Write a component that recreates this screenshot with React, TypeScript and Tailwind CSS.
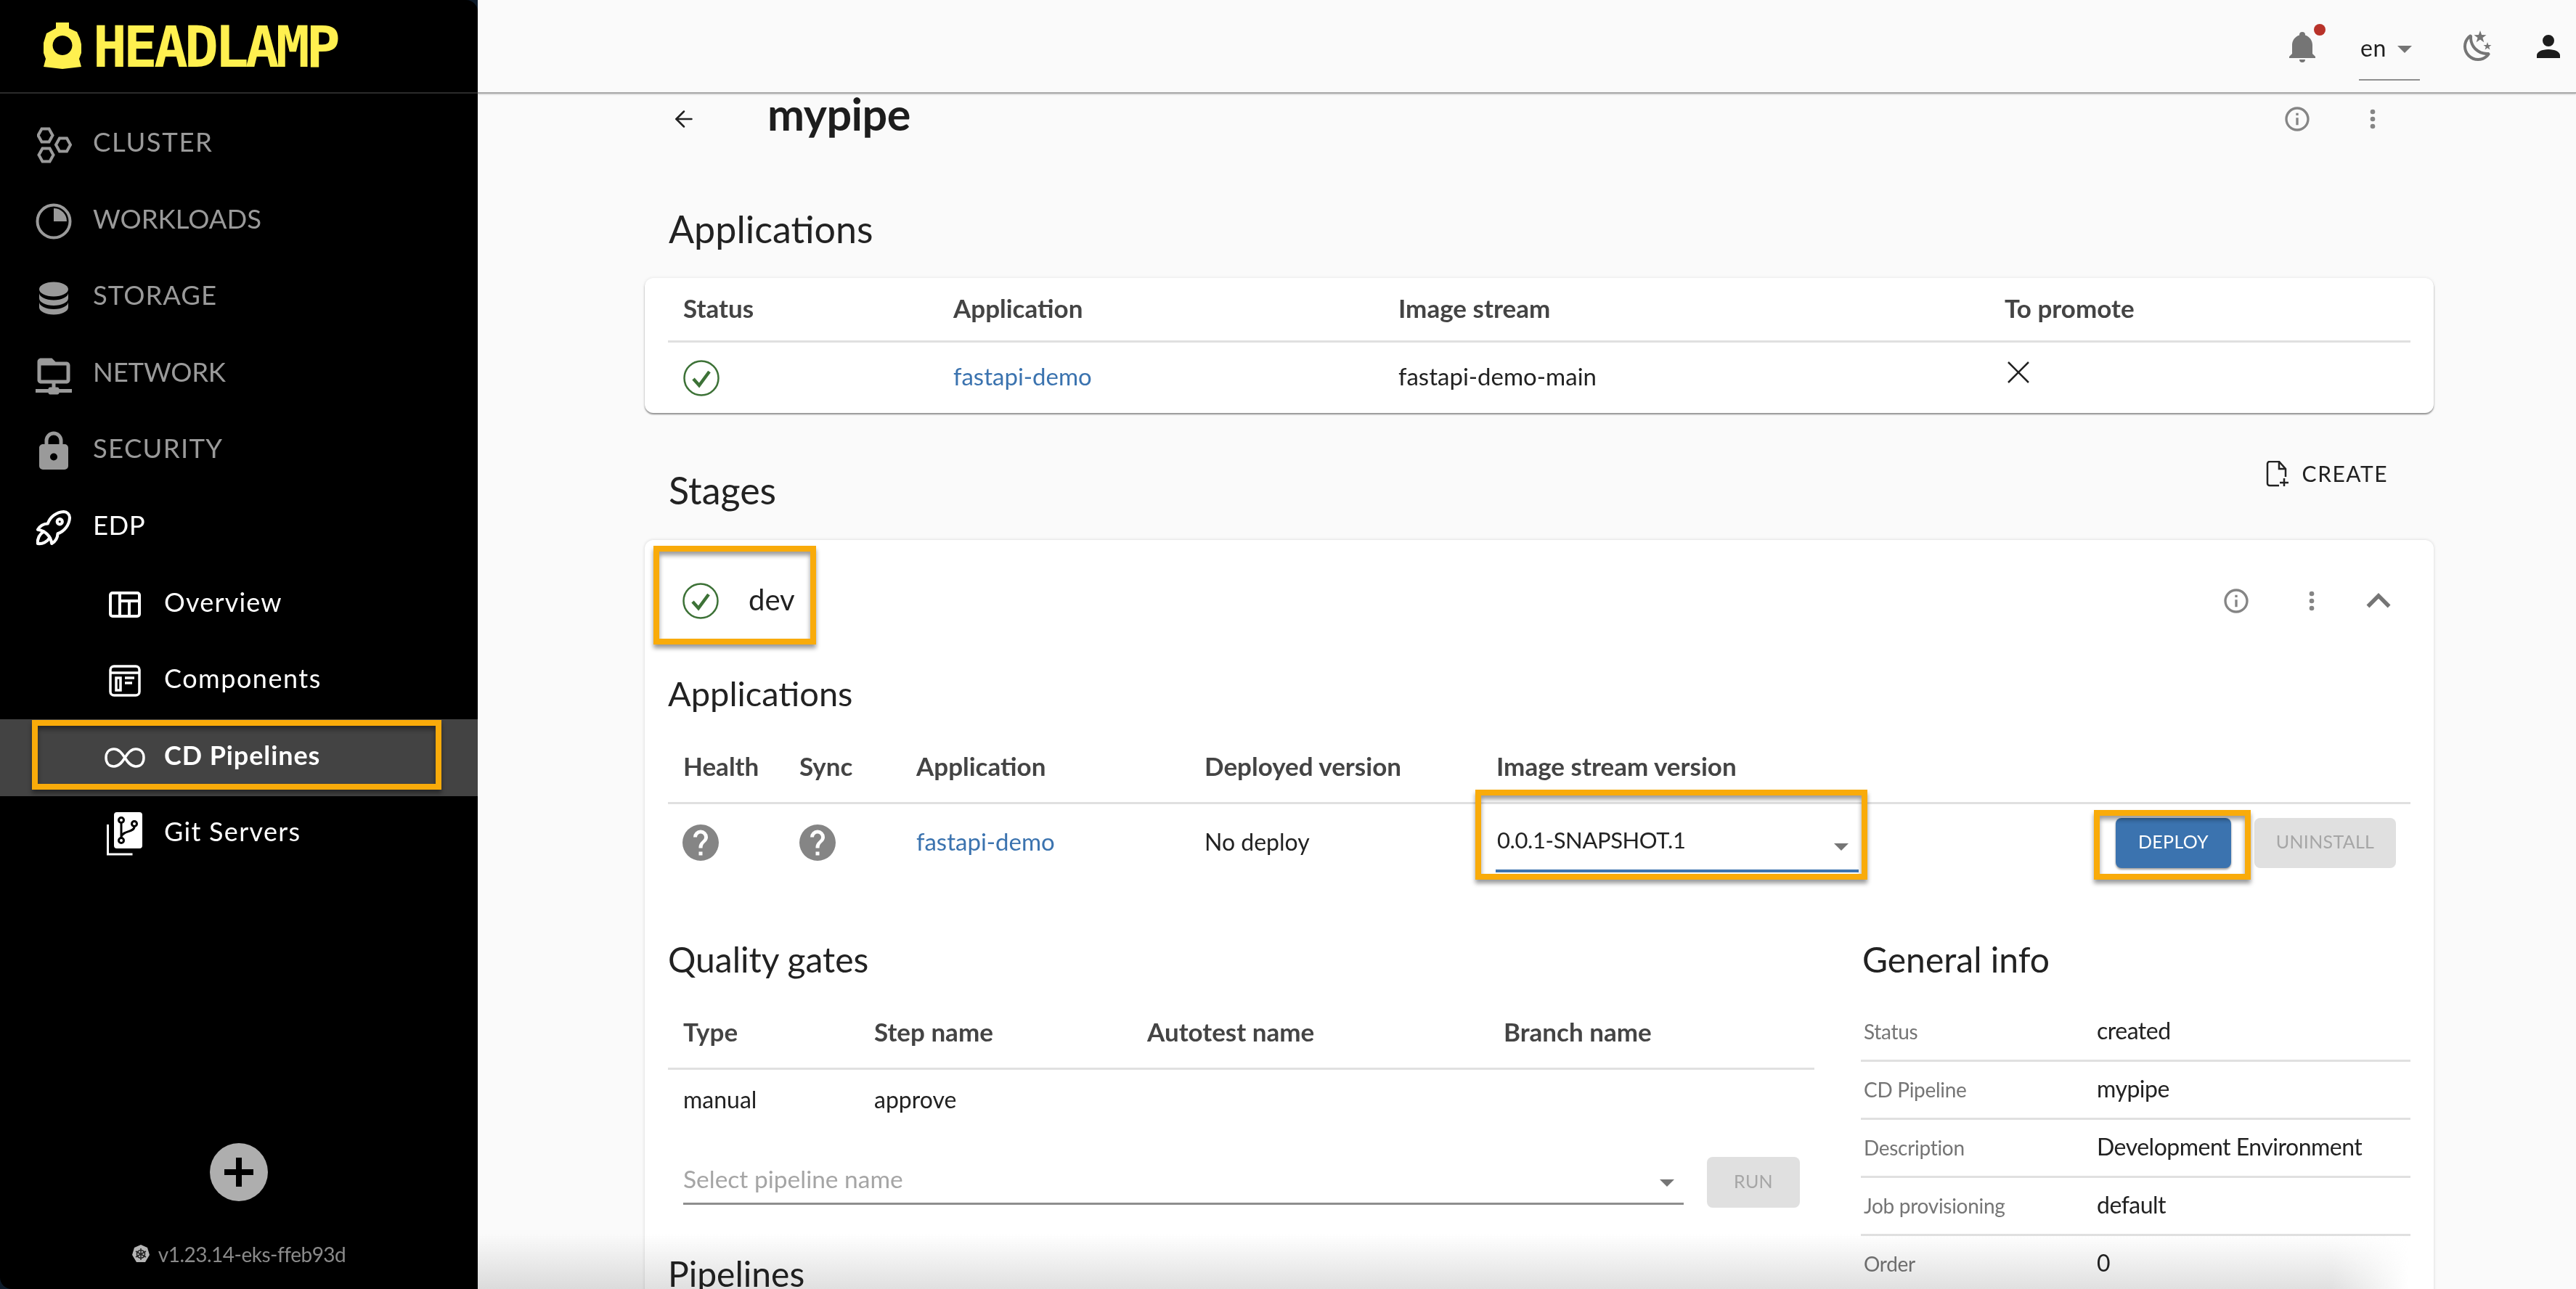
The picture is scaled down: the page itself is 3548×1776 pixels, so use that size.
import React from "react";
import { ArrowLeft } from "lucide-react";

const mdi = {
  storage: "M12,3C7.58,3 4,4.79 4,7C4,9.21 7.58,11 12,11C16.42,11 20,9.21 20,7C20,4.79 16.42,3 12,3M4,9V12C4,14.21 7.58,16 12,16C16.42,16 20,14.21 20,12V9C20,11.21 16.42,13 12,13C7.58,13 4,11.21 4,9M4,14V17C4,19.21 7.58,21 12,21C16.42,21 20,19.21 20,17V14C20,16.21 16.42,18 12,18C7.58,18 4,16.21 4,14Z",
  network: "M15 20C15 19.45 14.55 19 14 19H13V17H19C20.11 17 21 16.11 21 15V7C21 5.9 20.11 5 19 5H13L11 3H5C3.9 3 3 3.9 3 5V15C3 16.11 3.9 17 5 17H11V19H10C9.45 19 9 19.45 9 20H2V22H9C9 22.55 9.45 23 10 23H14C14.55 23 15 22.55 15 22H22V20H15M5 15V7H19V15H5Z",
  lock: "M12,17A2,2 0 0,0 14,15C14,13.89 13.1,13 12,13A2,2 0 0,0 10,15A2,2 0 0,0 12,17M18,8A2,2 0 0,1 20,10V20A2,2 0 0,1 18,22H6A2,2 0 0,1 4,20V10C4,8.89 4.9,8 6,8H7V6A5,5 0 0,1 12,1A5,5 0 0,1 17,6V8H18M12,3A3,3 0 0,0 9,6V8H15V6A3,3 0 0,0 12,3Z",
  bell: "M21,19V20H3V19L5,17V11C5,7.9 7.03,5.17 10,4.29C10,4.19 10,4.1 10,4A2,2 0 0,1 12,2A2,2 0 0,1 14,4C14,4.1 14,4.19 14,4.29C16.97,5.17 19,7.9 19,11V17L21,19M14,21A2,2 0 0,1 12,23A2,2 0 0,1 10,21",
  moon: "M17.75,4.09L15.22,6.03L16.13,9.09L13.5,7.28L10.87,9.09L11.78,6.03L9.25,4.09L12.44,4L13.5,1L14.56,4L17.75,4.09M21.25,11L19.61,12.25L20.2,14.23L18.5,13.06L16.8,14.23L17.39,12.25L15.75,11L17.81,10.95L18.5,9L19.19,10.95L21.25,11M18.97,15.95C19.8,15.87 20.69,17.05 20.16,17.8C19.84,18.25 19.5,18.67 19.08,19.07C15.17,23 8.84,23 4.94,19.07C1.03,15.17 1.03,8.83 4.94,4.93C5.34,4.53 5.76,4.17 6.21,3.85C6.96,3.32 8.14,4.21 8.06,5.04C7.79,7.9 8.75,10.87 10.95,13.06C13.14,15.26 16.1,16.22 18.97,15.95M17.33,17.97C14.5,17.81 11.7,16.64 9.53,14.5C7.36,12.31 6.2,9.5 6.04,6.68C3.23,9.82 3.34,14.64 6.35,17.66C9.37,20.67 14.19,20.78 17.33,17.97Z",
  person: "M12,4A4,4 0 0,1 16,8A4,4 0 0,1 12,12A4,4 0 0,1 8,8A4,4 0 0,1 12,4M12,14C16.42,14 20,15.79 20,18V20H4V18C4,15.79 7.58,14 12,14Z",
  info: "M11,9H13V7H11M12,20C7.59,20 4,16.41 4,12C4,7.59 7.59,4 12,4C16.41,4 20,7.59 20,12C20,16.41 16.41,20 12,20M12,2A10,10 0 0,0 2,12A10,10 0 0,0 12,22A10,10 0 0,0 22,12A10,10 0 0,0 12,2M11,17H13V11H11V17Z",
  dots: "M12,16A2,2 0 0,1 14,18A2,2 0 0,1 12,20A2,2 0 0,1 10,18A2,2 0 0,1 12,16M12,10A2,2 0 0,1 14,12A2,2 0 0,1 12,14A2,2 0 0,1 10,12A2,2 0 0,1 12,10M12,4A2,2 0 0,1 14,6A2,2 0 0,1 12,8A2,2 0 0,1 10,6A2,2 0 0,1 12,4Z",
  help: "M15.07,11.25L14.17,12.17C13.45,12.89 13,13.5 13,15H11V14.5C11,13.39 11.45,12.39 12.17,11.67L13.41,10.41C13.78,10.05 14,9.55 14,9C14,7.89 13.1,7 12,7A2,2 0 0,0 10,9H8A4,4 0 0,1 12,5A4,4 0 0,1 16,9C16,9.88 15.64,10.67 15.07,11.25M13,19H11V17H13M12,2A10,10 0 0,0 2,12A10,10 0 0,0 12,22A10,10 0 0,0 22,12C22,6.47 17.5,2 12,2Z",
  chevron: "M7.41,15.41L12,10.83L16.59,15.41L18,14L12,8L6,14L7.41,15.41Z",
};

function Mdi({ d, className }: { d: string; className: string }) {
  return (
    <svg viewBox="0 0 24 24" fill="currentColor" className={className}>
      <path d={d} />
    </svg>
  );
}

function HexIcon() {
  return (
    <svg viewBox="0 0 48 50" fill="none" stroke="currentColor" strokeWidth="4" className="w-[48px] h-[50px]">
      <path d="M1.5 11.5L6.5 2.5H16.5L21.5 11.5L16.5 20.5H6.5z" />
      <path d="M26 24.5L31 15.5H41L46 24.5L41 33.5H31z" />
      <path d="M2.5 38.5L7.5 29.5H17.5L22.5 38.5L17.5 47.5H7.5z" />
    </svg>
  );
}

function WorkloadIcon() {
  return (
    <svg viewBox="0 0 50 50" className="w-[50px] h-[50px]">
      <circle cx="25" cy="25" r="22.5" fill="none" stroke="currentColor" strokeWidth="4" />
      <path d="M25 7A18 18 0 0 1 43 25H25z" fill="currentColor" />
    </svg>
  );
}

function RocketIcon() {
  return (
    <svg viewBox="0 0 24 24" fill="none" stroke="currentColor" strokeWidth="1.500" strokeLinecap="round" strokeLinejoin="round" className="w-[66px] h-[66px]">
      <path d="M4 13a8 8 0 0 1 7 7a6 6 0 0 0 3 -5a9 9 0 0 0 6 -8a3 3 0 0 0 -3 -3a9 9 0 0 0 -8 6a6 6 0 0 0 -5 3" />
      <path d="M7 14a6 6 0 0 0 -3 6a6 6 0 0 0 6 -3" />
      <circle cx="15" cy="9" r="1.3" />
    </svg>
  );
}

function OverviewIcon() {
  return (
    <svg viewBox="0 0 44 36" fill="none" stroke="currentColor" strokeWidth="4" className="w-[44px] h-[36px]">
      <rect x="2" y="2" width="40" height="32" rx="3" />
      <path d="M15 2v32M15 13h27M28 13v21" />
    </svg>
  );
}

function ComponentsIcon() {
  return (
    <svg viewBox="0 0 44 44" fill="none" stroke="currentColor" strokeWidth="3.5" className="w-[44px] h-[44px]">
      <rect x="2" y="2" width="40" height="40" rx="5" />
      <path d="M2 11h40M22 18h13M22 25h10" />
      <rect x="10" y="18" width="6" height="17" />
    </svg>
  );
}

function InfinityIcon() {
  return (
    <svg viewBox="0 0 56 28" fill="none" stroke="currentColor" strokeWidth="3.5" className="w-[56px] h-[28px]">
      <path d="M28 14C23 6 19 2 13 2C6 2 2 7 2 14s4 12 11 12c6 0 10-4 15-12s9-12 15-12c7 0 11 5 11 12s-4 12-11 12c-6 0-10-4-15-12z" />
    </svg>
  );
}

function GitIcon() {
  return (
    <svg viewBox="0 0 49 60" className="w-[49px] h-[60px]">
      <path d="M1.5 17v41h34" fill="none" stroke="#fff" strokeWidth="3" />
      <rect x="10" y="0" width="39" height="50" rx="4" fill="#fff" />
      <g fill="none" stroke="#000" strokeWidth="3">
        <circle cx="20" cy="11" r="3.5" />
        <circle cx="20" cy="39" r="3.5" />
        <circle cx="38" cy="16" r="3.5" />
        <path d="M20 15v20M38 20c0 8-16 5-18 14" />
      </g>
    </svg>
  );
}

function LogoMark() {
  return (
    <svg viewBox="0 0 52 64" className="w-[52px] h-[64px] shrink-0">
      <path
        fill="#fff04f"
        fillRule="evenodd"
        d="M17 0h18v8l11 5 4 9 2 8v12l-3 8 3 11-26 3L0 61l3-11-3-8V28l4-13 13-7zM26 18a13.500 13.500 0 1 0 .01 0z"
      />
    </svg>
  );
}

function KubeIcon() {
  return (
    <svg viewBox="0 0 24 26" className="w-[24px] h-[26px]">
      <path d="M12 0l9 4 3 10-6 10-12 0L0 14 3 4z" fill="#b5b5b5" />
      <g fill="none" stroke="#222" strokeWidth="1.5">
        <circle cx="12" cy="13" r="5.500" />
        <path d="M12 5v16M5 9l14 8M19 9L5 17" />
      </g>
    </svg>
  );
}

function CheckIcon() {
  return (
    <svg viewBox="0 0 50 50" fill="none" stroke="#3d7237" className="w-[50px] h-[50px]">
      <circle cx="25" cy="25" r="23.500" strokeWidth="2.500" />
      <path d="M14 26l8 9 14-19" strokeWidth="4.500" />
    </svg>
  );
}

function Frame({ className }: { className: string }) {
  return (
    <div
      className={`absolute z-10 pointer-events-none border-[8px] border-[#f9ab0a] shadow-[0_5px_6px_rgba(0,0,0,0.4),inset_0_5px_6px_rgba(0,0,0,0.4)] ${className}`}
    />
  );
}

function Header({ children }: { children: React.ReactNode }) {
  return <div className="pl-[21px] pb-[4px] text-[35px] font-bold text-[#444]">{children}</div>;
}

function Cell({ children, className = "" }: { children: React.ReactNode; className?: string }) {
  return <div className={`pl-[21px] pb-[3px] text-[32px] text-[#222] ${className}`}>{children}</div>;
}

function Heading({ children, className = "" }: { children: React.ReactNode; className?: string }) {
  return <div className={`h-[48px] flex items-center text-[#222] ${className}`}>{children}</div>;
}

const primaryNav = [
  { label: "CLUSTER", icon: <HexIcon />, pad: "pl-[51px]", text: "tracking-[1.600px]" },
  { label: "WORKLOADS", icon: <WorkloadIcon />, pad: "pl-[49px]", text: "tracking-[0px]" },
  { label: "STORAGE", icon: <Mdi d={mdi.storage} className="w-[60px] h-[60px]" />, pad: "pl-[44px]", text: "tracking-[1px]" },
  { label: "NETWORK", icon: <Mdi d={mdi.network} className="w-[60px] h-[60px]" />, pad: "pl-[44px]", text: "tracking-[-0.200px]" },
  { label: "SECURITY", icon: <Mdi d={mdi.lock} className="w-[60px] h-[60px]" />, pad: "pl-[44px]", text: "tracking-[1.300px]" },
];

const subNav = [
  { label: "Overview", icon: <OverviewIcon />, pad: "pl-[150px]", text: "tracking-[1.200px]" },
  { label: "Components", icon: <ComponentsIcon />, pad: "pl-[150px]", text: "tracking-[1.500px]" },
  { label: "CD Pipelines", icon: <InfinityIcon />, pad: "pl-[144px]", text: "tracking-[0.900px] font-bold", active: true },
  { label: "Git Servers", icon: <GitIcon />, pad: "pl-[147px]", text: "tracking-[1.300px]" },
];

const generalInfo = [
  ["Status", "created"],
  ["CD Pipeline", "mypipe"],
  ["Description", "Development Environment"],
  ["Job provisioning", "default"],
  ["Order", "0"],
];

function Sidebar() {
  return (
    <aside className="relative w-[658px] h-full shrink-0 bg-black rounded-tr-[16px] rounded-bl-[16px] flex flex-col">
      <div className="h-[129px] shrink-0 border-b-[2px] border-[#2a2a2a] flex items-center pl-[60px] pb-[2px]">
        <LogoMark />
        <span className="ml-[16px] mt-[5px] text-[#fff04f] font-bold text-[78px] leading-none tracking-[-5px] [font-family:'DejaVu_Sans_Mono',monospace]">
          HEADLAMP
        </span>
      </div>
      <nav className="pt-[18px]">
        {primaryNav.map((item) => (
          <div key={item.label} className="h-[105.500px] flex items-center text-[#9a9a9a]">
            <div className={`w-[128px] flex items-center justify-start ${item.pad}`}>{item.icon}</div>
            <span className={`pb-[8px] text-[36.500px] ${item.text}`}>{item.label}</span>
          </div>
        ))}
        <div className="h-[105.500px] flex items-center text-white">
          <div className="w-[128px] pl-[41px] flex items-center">
            <RocketIcon />
          </div>
          <span className="pb-[8px] text-[36.500px] tracking-[0.5px]">EDP</span>
        </div>
        {subNav.map((item) => (
          <div
            key={item.label}
            className={`relative h-[105.500px] flex items-center text-white ${item.active ? "bg-[#434343]" : ""}`}
          >
            <div className={`w-[226px] flex items-center ${item.pad}`}>{item.icon}</div>
            <span className={`pb-[8px] text-[36px] ${item.text}`}>{item.label}</span>
            {item.active && <Frame className="left-[44px] top-[1px] w-[564px] h-[96px]" />}
          </div>
        ))}
      </nav>
      <div className="mt-auto flex flex-col items-center">
        <div className="w-[80px] h-[80px] rounded-full bg-[#aeaeae] flex items-center justify-center">
          <svg viewBox="0 0 40 40" className="w-[40px] h-[40px]" fill="#000">
            <path d="M16 0h8v16h16v8H24v16h-8V24H0v-8h16z" />
          </svg>
        </div>
        <div className="mt-[52px] mb-[27px] flex items-center gap-[12px] text-[#8a8a8a] text-[28px] tracking-[-0.5px]">
          <KubeIcon />
          <span>v1.23.14-eks-ffeb93d</span>
        </div>
      </div>
    </aside>
  );
}

function TopBar() {
  return (
    <header className="h-[129px] shrink-0 bg-[#fafafa] border-b-[2px] border-[#a9a9a9] shadow-[0_1px_2px_rgba(0,0,0,0.2)] flex items-center justify-end pr-[14px]">
      <div className="relative w-[48px] h-[48px] mr-[54px] text-[#757575]">
        <Mdi d={mdi.bell} className="w-[48px] h-[48px]" />
        <div className="absolute left-[40px] top-[-7px] w-[16px] h-[16px] rounded-full bg-[#b83229]" />
      </div>
      <div className="w-[84px] h-[66px] mt-[28px] border-b-[2px] border-[#8f8f8f] flex items-start pt-[2px] pl-[2px] text-[#1f1f1f]">
        <span className="text-[32px] leading-[38px] tracking-[0.5px]">en</span>
        <div className="ml-[15px] mt-[16px] w-0 h-0 border-x-[10px] border-x-transparent border-t-[10px] border-t-[#757575]" />
      </div>
      <Mdi d={mdi.moon} className="w-[48px] h-[48px] ml-[56px] text-[#757575]" />
      <Mdi d={mdi.person} className="w-[48px] h-[48px] ml-[49px] text-[#1d1d1d]" />
    </header>
  );
}

function StageCard() {
  return (
    <section className="relative bg-white rounded-t-[12px] shadow-[0_0_4px_rgba(0,0,0,0.15)] h-[1040px] px-[32px]">
      <Frame className="left-[12px] top-[8px] w-[224px] h-[136px]" />
      <Frame className="left-[1144px] top-[344px] w-[540px] h-[124px]" />
      <Frame className="left-[1996px] top-[372px] w-[216px] h-[96px]" />

      <div className="h-[168px] flex items-center pl-[20px]">
        <CheckIcon />
        <span className="ml-[41px] pb-[4px] text-[40px] text-[#222]">dev</span>
        <div className="ml-auto flex items-center text-[#858585]">
          <Mdi d={mdi.info} className="w-[40px] h-[40px]" />
          <Mdi d={mdi.dots} className="w-[40px] h-[40px] ml-[64px]" />
          <Mdi d={mdi.chevron} className="w-[66px] h-[66px] ml-[39px] mr-[11px] text-[#757575]" />
        </div>
      </div>

      <Heading className="mt-[19px] text-[47px]">Applications</Heading>
      <div className="mt-[31px] h-[98px] grid grid-cols-[160px_161px_397px_402px_1fr] items-center border-b-[3px] border-[#e0e0e0]">
        <Header>Health</Header>
        <Header>Sync</Header>
        <Header>Application</Header>
        <Header>Deployed version</Header>
        <Header>Image stream version</Header>
      </div>
      <div className="h-[106px] grid grid-cols-[160px_161px_397px_402px_1fr] items-center">
        <div className="pl-[15px] text-[#858585]">
          <Mdi d={mdi.help} className="w-[60px] h-[60px]" />
        </div>
        <div className="pl-[16px] text-[#858585]">
          <Mdi d={mdi.help} className="w-[60px] h-[60px]" />
        </div>
        <Cell className="!text-[#3b73af] !text-[33px]">fastapi-demo</Cell>
        <Cell>No deploy</Cell>
        <div className="flex items-center pl-[20px]">
          <div className="relative w-[500px] h-[70px] border-b-[4px] border-[#3b73af] flex items-center pl-[2px] mt-[12px]">
            <span className="text-[31px] text-[#222] tracking-[-0.4px] pb-[16px]">0.0.1-SNAPSHOT.1</span>
            <div className="absolute right-[14px] top-[30px] w-0 h-0 border-x-[10px] border-x-transparent border-t-[10px] border-t-[#757575]" />
          </div>
          <div className="ml-auto flex items-center gap-[32px] pr-[20px]">
            <button className="w-[159px] h-[69px] pb-[3px] rounded-[8px] bg-[#3b73af] text-white text-[25px] tracking-[0.3px] shadow-[0_2px_3px_rgba(0,0,0,0.4)]">
              DEPLOY
            </button>
            <button className="w-[195px] h-[69px] pb-[3px] rounded-[8px] bg-[#e0e0e0] text-[#a6a6a6] text-[25px] tracking-[0.3px]">
              UNINSTALL
            </button>
          </div>
        </div>
      </div>

      <div className="grid grid-cols-[1579px_757px] gap-x-[64px]">
        <div>
          <Heading className="mt-[84px] text-[48px]">Quality gates</Heading>
          <div className="mt-[30px] h-[98px] grid grid-cols-[263px_376px_491px_1fr] items-center border-b-[3px] border-[#e0e0e0]">
            <Header>Type</Header>
            <Header>Step name</Header>
            <Header>Autotest name</Header>
            <Header>Branch name</Header>
          </div>
          <div className="h-[84px] grid grid-cols-[263px_376px_491px_1fr] items-center">
            <Cell>manual</Cell>
            <Cell>approve</Cell>
          </div>
          <div className="mt-[36px] h-[70px] flex pl-[21px]">
            <div className="relative w-[1378px] h-[66px] border-b-[3px] border-[#8e8e8e] flex items-center">
              <span className="text-[33.500px] text-[#a5a5a5] pb-[3px]">Select pipeline name</span>
              <div className="absolute right-[13px] top-[31px] w-0 h-0 border-x-[10px] border-x-transparent border-t-[10px] border-t-[#757575]" />
            </div>
            <button className="ml-[32px] w-[128px] h-[70px] pb-[3px] rounded-[8px] bg-[#e0e0e0] text-[#a6a6a6] text-[25px] tracking-[0.3px]">
              RUN
            </button>
          </div>
          <Heading className="mt-[67px] text-[48px]">Pipelines</Heading>
        </div>
        <div>
          <Heading className="mt-[84px] pl-[2px] text-[48px]">General info</Heading>
          <div className="mt-[37px]">
            {generalInfo.map(([label, value]) => (
              <div key={label} className="h-[80px] grid grid-cols-[325px_1fr] items-center border-b-[3px] border-[#e0e0e0]">
                <span className="pl-[4px] pb-[2px] text-[28px] text-[#757575] tracking-[-0.3px]">{label}</span>
                <span className="pb-[3px] text-[32px] text-[#222] tracking-[-0.5px]">{value}</span>
              </div>
            ))}
          </div>
        </div>
      </div>
    </section>
  );
}

export default function App() {
  return (
    <div className="w-[3548px] h-[1776px] flex overflow-hidden bg-[#0d1b2a] [font-family:Lato,sans-serif]">
      <Sidebar />
      <main className="relative flex-1 h-full flex flex-col bg-[#fafafa] overflow-hidden">
        <TopBar />
        <div className="pl-[230px] w-[2694px]">
          <div className="h-[70px] flex items-center">
            <ArrowLeft className="ml-[36px] w-[36px] h-[36px] text-[#222]" strokeWidth={1.700} />
            <span className="ml-[97px] pb-[14px] text-[61px] font-bold text-[#1d1d1d] tracking-[-0.5px]">mypipe</span>
            <div className="ml-auto flex items-center text-[#858585] mr-[64px]">
              <Mdi d={mdi.info} className="w-[40px] h-[40px]" />
              <Mdi d={mdi.dots} className="w-[40px] h-[40px] ml-[64px]" />
            </div>
          </div>

          <Heading className="mt-[92px] ml-[33px] text-[52px]">Applications</Heading>
          <section className="mt-[44px] h-[186px] bg-white rounded-[12px] shadow-[0_2px_2px_rgba(0,0,0,0.4),0_0_4px_rgba(0,0,0,0.1)] px-[32px]">
            <div className="h-[89px] grid grid-cols-[372px_613px_835px_1fr] items-center border-b-[3px] border-[#e0e0e0]">
              <Header>Status</Header>
              <Header>Application</Header>
              <Header>Image stream</Header>
              <Header>To promote</Header>
            </div>
            <div className="h-[97px] grid grid-cols-[372px_613px_835px_1fr] items-center">
              <div className="pl-[21px]">
                <CheckIcon />
              </div>
              <Cell className="!text-[#3b73af] !text-[33px]">fastapi-demo</Cell>
              <Cell className="!text-[33px]">fastapi-demo-main</Cell>
              <div className="pl-[25px] pb-[16px]">
                <svg viewBox="0 0 30 30" className="w-[30px] h-[30px]" fill="none" stroke="#222" strokeWidth="2.500">
                  <path d="M1 1l28 28M29 1L1 29" />
                </svg>
              </div>
            </div>
          </section>

          <div className="h-[175px] relative flex items-start ml-[33px]">
            <Heading className="mt-[82px] text-[52px]">Stages</Heading>
            <div className="ml-auto mr-[63px] mt-[61px] flex items-center text-[#222]">
              <svg viewBox="0 0 32 36" fill="none" stroke="currentColor" strokeWidth="2.500" className="w-[32px] h-[36px]">
                <path d="M18 34H5a3 3 0 0 1-3-3V4a3 3 0 0 1 3-3h13l9 10v11M18 1v10h9M25 24v11M19 30h12" />
              </svg>
              <span className="ml-[18px] text-[30px] tracking-[1.500px]">CREATE</span>
            </div>
          </div>

          <StageCard />
        </div>
        <div className="absolute left-0 bottom-0 w-[2660px] h-[76px] bg-gradient-to-t from-[#e0e0e0] to-transparent [mask-image:linear-gradient(to_right,black_96%,transparent)] mix-blend-multiply pointer-events-none" />
      </main>
    </div>
  );
}
